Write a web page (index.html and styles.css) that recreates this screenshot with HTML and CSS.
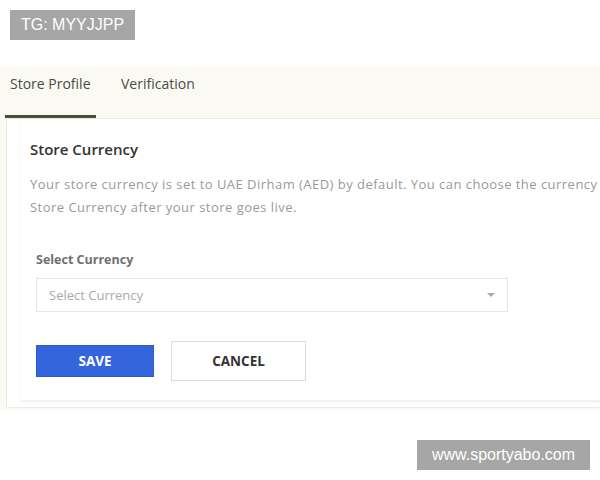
FILE: index.html
```html
<html>
<head>
  <title>Store Settings</title>
  <link rel="stylesheet" href="styles.css">
</head>
<body>
  <div class="tg">TG: MYYJJPP</div>

  <div class="band">
    <div class="tabs">
      <div class="tab active">Store Profile</div>
      <div class="tab">Verification</div>
    </div>
    <div class="card">
      <div class="panel">
        <h2 class="title">Store Currency</h2>
        <p class="desc">Your store currency is set to UAE Dirham (AED) by default. You can choose the currency<br>
          Store Currency after your store goes live.</p>
        <div class="label">Select Currency</div>
        <div class="select">
          <span>Select Currency</span>
          <span class="caret"></span>
        </div>
        <div class="actions">
          <button class="btn save">SAVE</button>
          <button class="btn cancel">CANCEL</button>
        </div>
      </div>
    </div>
  </div>

  <div class="site">www.sportyabo.com</div>
</body>
</html>
```

FILE: styles.css
```css
body { margin: 0; background: #fff; font-family: "Open Sans", "Liberation Sans", sans-serif; overflow: hidden; width: 600px; }

.tg { margin: 10px 0 0 10px; width: 125px; height: 30px; line-height: 30px; background: #a6a6a6; color: #fff;
      font-family: "Liberation Sans", Arial, sans-serif; font-size: 16px; text-align: center; }

.band { margin-top: 26px; background: #fbfaf2; height: 344px; }

.tabs { display: flex; height: 52px; padding-left: 5px; }
.tab { font-size: 14px; color: #4a4a4a; padding: 8px 0 0 5px; }
.tab.active { width: 91px; border-bottom: 3px solid #4b4b3b; box-sizing: border-box; margin-right: 20px; }

.card { margin-left: 6px; background: #fff; border: 1px solid #ecece4; border-right: none; height: 290px; box-sizing: border-box; overflow: hidden; }
.panel { margin-left: 14px; height: 281px; box-shadow: 0 2px 3px rgba(0,0,0,0.07); padding: 20px 0 0 9px; box-sizing: border-box; }

.title { margin: 0; font-size: 15px; font-weight: 600; color: #333; height: 25px; }
.desc { margin: 9px 0 0; font-size: 13px; letter-spacing: 0.47px; line-height: 23px; color: #9a9a9a; white-space: nowrap; }

.label { margin: 32px 0 0 6px; font-size: 12.5px; font-weight: 700; color: #707070; }
.select { margin: 10px 0 0 6px; width: 472px; height: 34px; border: 1px solid #e6e6e6; box-sizing: border-box;
          display: flex; align-items: center; justify-content: space-between; padding: 0 12px; font-size: 13px; color: #aaa; }
.caret { width: 0; height: 0; border-left: 4px solid transparent; border-right: 4px solid transparent; border-top: 4px solid #aaa; }

.actions { display: flex; align-items: center; gap: 17px; margin: 29px 0 0 6px; }
.btn { font-family: "Open Sans", "Liberation Sans", sans-serif; font-size: 13.5px; font-weight: 700; cursor: pointer; }
.save { width: 118px; height: 32px; background: #3565dd; border: 1px solid #2f5bc8; color: #fff; }
.cancel { width: 135px; height: 40px; background: #fff; border: 1px solid #dcdcdc; color: #333; }

.site { margin: 30px 10px 0 auto; width: 173px; height: 30px; line-height: 30px; background: #a6a6a6; color: #fff;
        font-family: "Liberation Sans", Arial, sans-serif; font-size: 16px; text-align: center; }
```
